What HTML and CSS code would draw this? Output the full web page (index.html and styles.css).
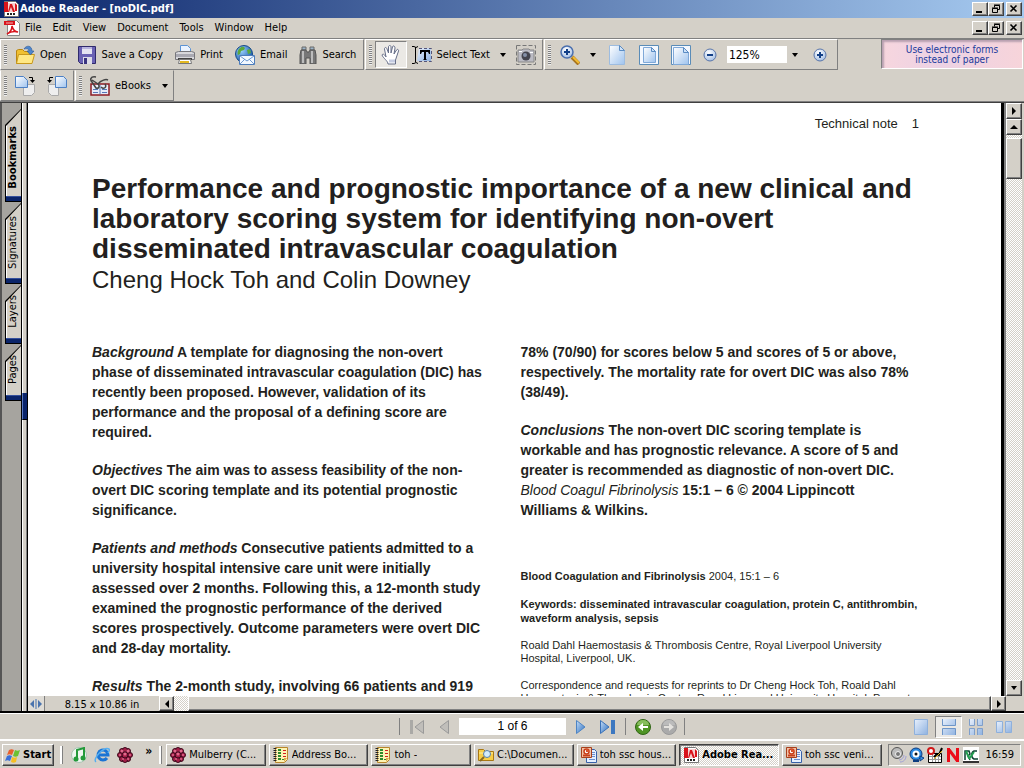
FILE: index.html
```html
<!DOCTYPE html>
<html lang="en">
<head>
<meta charset="utf-8">
<title>Adobe Reader - [noDIC.pdf]</title>
<link rel="stylesheet" href="styles.css">
</head>
<body>
<svg class="defs" aria-hidden="true">
  <defs>
    <linearGradient id="sheet" x1="0" y1="0" x2="1" y2="1"><stop offset="0" stop-color="#fff"/><stop offset="1" stop-color="#9fc3ee"/></linearGradient>
    <linearGradient id="tile" x1="0" y1="0" x2="1" y2="1"><stop offset="0" stop-color="#e8f0fc"/><stop offset="1" stop-color="#8fb2e0"/></linearGradient>
    <linearGradient id="blueplay" x1="0" y1="0" x2="1" y2="1"><stop offset="0" stop-color="#c4dcf6"/><stop offset="1" stop-color="#2c6fc0"/></linearGradient>
    <radialGradient id="orb" cx=".4" cy=".3" r=".8"><stop offset="0" stop-color="#fff"/><stop offset="1" stop-color="#9ab8e2"/></radialGradient>
    <radialGradient id="globe" cx=".35" cy=".3" r=".8"><stop offset="0" stop-color="#9ad0ff"/><stop offset="1" stop-color="#0b4ea0"/></radialGradient>
    <symbol id="adobe" viewBox="0 0 16 16">
      <path d="M1.500.500h11l3 3v12h-14z" fill="#fff" stroke="#777"/><path d="M1 1h4v10H1z" fill="#d8131b"/><path d="M5 2h7v9H5z" fill="#f6d0d0"/>
      <path d="M5 11l2-8h2l3 8h-2L8 6l-2 5z" fill="#d8131b"/><path d="M12 2v8h2V4z" fill="#d8131b"/><path d="M4 13h9" stroke="#222" stroke-width="2" stroke-dasharray="2 1"/>
    </symbol>
    <symbol id="berry" viewBox="0 0 16 16">
      <g fill="#a51e48" stroke="#3c0a1c"><circle cx="5" cy="4" r="2.500"/><circle cx="11" cy="4" r="2.500"/><circle cx="3" cy="8" r="2.500"/><circle cx="13" cy="8" r="2.500"/><circle cx="5" cy="12" r="2.500"/><circle cx="11" cy="12" r="2.500"/><circle cx="8" cy="13" r="2.500"/><circle cx="8" cy="3" r="2.500"/><circle cx="8" cy="8" r="3"/></g>
      <g fill="#e06a8c"><circle cx="5" cy="4" r="1.500"/><circle cx="11" cy="4" r="1.500"/><circle cx="8" cy="7" r="1.500"/><circle cx="3" cy="8" r="1"/><circle cx="13" cy="8" r="1"/><circle cx="6" cy="12" r="1"/><circle cx="11" cy="12" r="1"/></g>
    </symbol>
    <symbol id="notes" viewBox="0 0 16 16">
      <path d="M2.500.500h12v12l-3 3h-9z" fill="#fdf3b4" stroke="#b9862c"/><path d="M14 11h-3v4z" fill="#e0a648"/><path d="M2 1v14" stroke="#222" stroke-width="3" stroke-dasharray="1 1"/>
      <path d="M5 3h3M5 6h3M5 9h3M5 12h3" stroke="#2c8a2c" stroke-width="2"/><path d="M10 3.500h3M10 6.500h3M10 9.500h3" stroke="#d02020"/><path d="M9 12.500h2" stroke="#2c8a2c"/>
    </symbol>
    <symbol id="slides" viewBox="0 0 16 16">
      <path d="M5.500 2.500h8l2 2v11h-10z" fill="#e5efff" stroke="#3760a8"/><path d="M8 12.500h6M11 5.500h3M11 7.500h3M11 9.500h3" stroke="#6b8fd0"/>
      <path d="M.5.500h10v10H.5z" fill="#f2c3a8" stroke="#a8401c"/><circle cx="5.500" cy="4.500" r="2.500" fill="#fff" stroke="#c8401c" stroke-width="1.500"/><path d="M5 5V2a3 3 0 0 1 3 3z" fill="#d9532c"/><path d="M2 8.500h7" stroke="#c8401c" stroke-width="2"/>
    </symbol>
    <symbol id="min" viewBox="0 0 12 10"><path d="M2 8h6" stroke="#000" stroke-width="2"/></symbol>
    <symbol id="restore" viewBox="0 0 12 10"><path d="M4.500 3.500v-2h5v4h-2M4 1h6M2.500 4.500h5v4h-5zM2 4h6" fill="none" stroke="#000"/></symbol>
    <symbol id="close" viewBox="0 0 12 10"><path d="M2.500 1.500l6 6M8.500 1.500l-6 6" stroke="#000" stroke-width="1.600"/></symbol>
    <symbol id="down" viewBox="0 0 8 8"><path d="M1 2h6L4 6z" fill="#000"/></symbol>
    <symbol id="up" viewBox="0 0 8 8"><path d="M0 6h8L4 2z" fill="#000"/></symbol>
    <symbol id="left" viewBox="0 0 8 8"><path d="M6 0v8L2 4z" fill="#000"/></symbol>
    <symbol id="right" viewBox="0 0 8 8"><path d="M2 0v8l4-4z" fill="#000"/></symbol>
  </defs>
</svg>

<div class="app">
  <header class="titlebar">
    <svg class="i16"><use href="#adobe"/></svg>
    <h1 class="title">Adobe Reader - [noDIC.pdf]</h1>
    <div class="winbtns">
      <button class="winbtn" aria-label="Minimize"><svg><use href="#min"/></svg></button><button class="winbtn" aria-label="Restore"><svg><use href="#restore"/></svg></button><button class="winbtn last" aria-label="Close"><svg><use href="#close"/></svg></button>
    </div>
  </header>

  <nav class="menubar">
    <svg class="i16" viewBox="0 0 16 16"><path d="M3.500.500h9l3 3v12h-12z" fill="#fff" stroke="#888"/><path d="M0 1h11v4H0z" fill="#d8131b"/><path d="M2 3h7" stroke="#f4b4b4"/><path d="M3 14c4-2 5-5 5-8 1 4 3 6 6 6-4-1-8 0-11 2z" fill="none" stroke="#d8131b" stroke-width="1.500"/></svg>
    <button>File</button><button>Edit</button><button>View</button><button>Document</button><button>Tools</button><button>Window</button><button>Help</button>
    <div class="winbtns">
      <button class="winbtn" aria-label="Minimize document"><svg><use href="#min"/></svg></button><button class="winbtn" aria-label="Restore document"><svg><use href="#restore"/></svg></button><button class="winbtn last" aria-label="Close document"><svg><use href="#close"/></svg></button>
    </div>
  </nav>

  <div class="toolrow">
    <div class="group file">
      <i class="grip"></i>
      <button class="tool"><svg class="i20" viewBox="0 0 20 20"><path d="M1.500 18.500v-13l2-1h4l2 2h7v12z" fill="#f0c030" stroke="#b98612"/><path d="M1.500 18.500l2-9h16l-2.500 9z" fill="#ffe884" stroke="#c8981c"/><path d="M9 4c2-4 8-4 8 2h2l-3.500 4L12 6h2c0-2-2-3-5-2z" fill="#4d86cc" stroke="#2a5898" stroke-width=".6"/></svg>Open</button>
      <button class="tool"><svg class="i18" viewBox="0 0 18 18"><path d="M.5.500h17v17h-15l-2-2z" fill="#6a62b4" stroke="#2f2a6c"/><path d="M4 1h10v7H4z" fill="#e4e4f2"/><path d="M4 2h10" stroke="#8c84cc"/><path d="M5 11h9v7H5z" fill="#dcdce8"/><path d="M6 12h3v6H6z" fill="#3a3480"/></svg>Save a Copy</button>
      <button class="tool"><svg class="i20" viewBox="0 0 20 20"><path d="M5.500 8V.5h7l3 3V8z" fill="#eaf3ff" stroke="#5c93d4"/><path d="M.5 7.500l3-1h13l3 1v7h-19z" fill="#d8d8dc" stroke="#77777c"/><path d="M1 9h18v3H1z" fill="#a9a9b2"/><path d="M3 13h14v2H3z" fill="#444"/><path d="M4.500 14.500h11l1 4h-13z" fill="#fff" stroke="#777"/><path d="M5 17h9" stroke="#e3b820" stroke-width="2"/></svg>Print</button>
      <button class="tool"><svg class="i20" viewBox="0 0 20 20"><circle cx="9" cy="9" r="8.500" fill="url(#globe)" stroke="#174a88"/><path d="M5 3c2-2 4-1 5 0l-1 2-3 1-1 3-2 1C2 8 3 4 5 3zM12 5l3-1 1 4-3 1z" fill="#5ca83c"/><path d="M4.500 10.500h15v9h-15z" fill="#f2f8ff" stroke="#4d7cba"/><path d="M5 11l7 5 7-5M5 19l5-5M19 19l-5-5" fill="none" stroke="#6f9ad0"/></svg>Email</button>
      <button class="tool"><svg class="i18" viewBox="0 0 18 18"><path d="M3 1h4v3H3zM11 1h4v3h-4z" fill="#9cb4c8" stroke="#6b6b6b"/><path d="M2 4h5l1 2h2l1-2h5l1 5v9h-6v-6H7v6H1V9z" fill="#777" stroke="#555"/><path d="M4 5v12M13 5v12" stroke="#bcbcbc" stroke-width="2"/></svg>Search</button>
    </div>
    <div class="group basic">
      <i class="grip"></i>
      <button class="tool active" aria-label="Hand tool"><svg class="i20" viewBox="0 0 20 20"><path d="M7 19c0-3-5-6-6-9 1-2 3 0 4 2L3.500 4c0-2 2-2 2.500 0l1.500 4V2c0-2 2.500-2 2.500 0v6l1.500-6c.5-2 2.500-1 2.500 1l-1 6 2.500-4c1-1.500 2.500 0 2 1l-3 9v4z" fill="#fff" stroke="#666e88"/><path d="M8 16h6" stroke="#c5cce2" stroke-width="3"/></svg></button>
      <button class="tool"><svg class="i20" viewBox="0 0 20 20"><path d="M0 1.500h2l2 1 2-1M0 18.500h2l2-1 2 1M3.500 2v15" fill="none" stroke="#000"/><path d="M7 3h12v13H5z" fill="url(#tile)"/><path d="M7 3.500h12.500v13H7" fill="none" stroke="#557" stroke-dasharray="3 2"/><path d="M8 5h10v4h-1l-1-2h-2v7l1 1h-4l1-1V7h-2L9 9H8z" fill="#000"/></svg>Select Text<svg class="i8"><use href="#down"/></svg></button>
      <button class="tool" aria-label="Snapshot tool"><svg class="i20" viewBox="0 0 20 20"><path d="M.5.500h19v19H.5z" fill="none" stroke="#777" stroke-dasharray="4 2"/><path d="M2 5h4l1-1h6l1 1h4v12H2z" fill="#bbbbc4" stroke="#888"/><circle cx="10" cy="11" r="4.500" fill="#45454f"/><circle cx="9" cy="10" r="2" fill="#8590a8"/><path d="M3 6.500h3M14 7.500h3" stroke="#fff"/></svg></button>
    </div>
    <div class="group zoom">
      <i class="grip"></i>
      <button class="tool" aria-label="Zoom in tool"><svg class="i20" viewBox="0 0 20 20"><path d="M12 12l7 7" stroke="#a87420" stroke-width="4"/><path d="M13 12l6 6" stroke="#f4bd32" stroke-width="2"/><circle cx="7" cy="7" r="6" fill="url(#orb)" stroke="#4a6fae" stroke-width="1.500"/><path d="M4 7h6M7 4v6" stroke="#113f88" stroke-width="2"/></svg><svg class="i8"><use href="#down"/></svg></button>
      <button class="tool actual" aria-label="Actual size"><svg class="i20" viewBox="0 0 20 20"><path d="M2.500.500h10l5 5v14h-15z" fill="url(#sheet)" stroke="#9dbce0"/><path d="M12.500.500v5h5z" fill="#cfe2f8" stroke="#5a8cc4"/></svg></button>
      <button class="tool" aria-label="Fit page"><svg class="i20" viewBox="0 0 20 20"><path d="M.5.500h19v19H.5z" fill="#f4f8ff" stroke="#5a8cb8"/><path d="M4.500 2.500h8l4 4v11h-12z" fill="url(#sheet)" stroke="#7fa8d8"/><path d="M12.500 2.500v4h4z" fill="#cfe2f8" stroke="#5a8cc4"/></svg></button>
      <button class="tool" aria-label="Fit width"><svg class="i20" viewBox="0 0 20 20"><path d="M.5.500h19v19H.5z" fill="#f4f8ff" stroke="#5a8cb8"/><path d="M2.500 2.500h10l5 5v12h-15z" fill="url(#sheet)" stroke="#7fa8d8"/><path d="M12.500 2.500v5h5z" fill="#cfe2f8" stroke="#5a8cc4"/></svg></button>
      <button class="tool" aria-label="Zoom out"><svg class="i14" viewBox="0 0 14 14"><circle cx="7" cy="7" r="6" fill="url(#orb)" stroke="#5a76aa"/><path d="M4 7h6" stroke="#123f86" stroke-width="2"/></svg></button>
      <input class="zoomval" type="text" value="125%" aria-label="Zoom level">
      <button class="tool arrow" aria-label="Zoom presets"><svg class="i8"><use href="#down"/></svg></button>
      <button class="tool" aria-label="Zoom in"><svg class="i14" viewBox="0 0 14 14"><circle cx="7" cy="7" r="6" fill="url(#orb)" stroke="#5a76aa"/><path d="M4 7h6M7 4v6" stroke="#123f86" stroke-width="2"/></svg></button>
    </div>
    <a class="promo" href="#">Use electronic forms<br>instead of paper</a>
  </div>

  <div class="toolrow second">
    <div class="group rotate">
      <i class="grip"></i>
      <button class="tool" aria-label="Rotate clockwise"><svg class="i20" viewBox="0 0 20 20"><path d="M8.500 8.500h11v8l-3 3h-8z" fill="#eee" stroke="#aaa"/><path d="M.5.500h8l4 4v7H.5z" fill="url(#sheet)" stroke="#4c80c4"/><path d="M14 1.500h3.500V5" fill="none" stroke="#000"/><path d="M15 4h5l-2.500 3z"/></svg></button>
      <button class="tool" aria-label="Rotate counterclockwise"><svg class="i20" viewBox="0 0 20 20"><path d="M1.500 8.500h10v11h-7l-3-3z" fill="#eee" stroke="#aaa"/><path d="M8.500.500h8l3 3v8h-11z" fill="url(#sheet)" stroke="#4c80c4"/><path d="M6 1.500H2.500V5" fill="none" stroke="#000"/><path d="M0 4h5L2.500 7z"/></svg></button>
    </div>
    <div class="group books">
      <i class="grip"></i>
      <button class="tool"><svg class="i20" viewBox="0 0 20 20"><path d="M1 8h18v11H1z" fill="#e7ecf8" stroke="#8d1c24" stroke-width="1.500"/><path d="M10 9v9M3 13.500h5M3 16.500h5M12 13.500h5M12 16.500h5" stroke="#5577b8"/><path d="M6 1C0 0 0 4 2 6l4 6c3 1 4-2 2-4L2 4M8 8c3-4 8-5 10-4M11 11c3 3 6 0 4-3" fill="none" stroke="#444" stroke-width="1.500"/></svg>eBooks<svg class="i8"><use href="#down"/></svg></button>
    </div>
  </div>

  <main class="work">
    <aside class="tabs">
      <div class="tablist">
        <button class="tab t1"><span>Bookmarks</span></button>
        <button class="tab t2"><span>Signatures</span></button>
        <button class="tab t3"><span>Layers</span></button>
        <button class="tab t4"><span>Pages</span></button>
      </div>
      <div class="splitter"><i></i></div>
    </aside>
    <div class="viewer">
      <div class="canvas">
        <article class="page">
          <p class="folio">Technical note<span>1</span></p>
          <h2 class="headline">Performance and prognostic importance of a new clinical and<br>laboratory scoring system for identifying non-overt<br>disseminated intravascular coagulation</h2>
          <p class="authors">Cheng Hock Toh and Colin Downey</p>
          <div class="columns">
            <div class="abstract">
              <p><em>Background</em> A template for diagnosing the non-overt<br>phase of disseminated intravascular coagulation (DIC) has<br>recently been proposed. However, validation of its<br>performance and the proposal of a defining score are<br>required.</p>
              <p><em>Objectives</em> The aim was to assess feasibility of the non-<br>overt DIC scoring template and its potential prognostic<br>significance.</p>
              <p><em>Patients and methods</em> Consecutive patients admitted to a<br>university hospital intensive care unit were initially<br>assessed over 2 months. Following this, a 12-month study<br>examined the prognostic performance of the derived<br>scores prospectively. Outcome parameters were overt DIC<br>and 28-day mortality.</p>
              <p><em>Results</em> The 2-month study, involving 66 patients and 919</p>
            </div>
            <div class="abstract">
              <p>78% (70/90) for scores below 5 and scores of 5 or above,<br>respectively. The mortality rate for overt DIC was also 78%<br>(38/49).</p>
              <p><em>Conclusions</em> The non-overt DIC scoring template is<br>workable and has prognostic relevance. A score of 5 and<br>greater is recommended as diagnostic of non-overt DIC.<br><em class="journal">Blood Coagul Fibrinolysis</em> 15:1 – 6 © 2004 Lippincott<br>Williams &amp; Wilkins.</p>
              <div class="meta">
                <p><b>Blood Coagulation and Fibrinolysis</b> 2004, 15:1 – 6</p>
                <p><b>Keywords: disseminated intravascular coagulation, protein C, antithrombin,<br>waveform analysis, sepsis</b></p>
                <p class="tight">Roald Dahl Haemostasis &amp; Thrombosis Centre, Royal Liverpool University<br>Hospital, Liverpool, UK.</p>
                <p class="tight">Correspondence and requests for reprints to Dr Cheng Hock Toh, Roald Dahl<br>Haemostasis &amp; Thrombosis Centre, Royal Liverpool University Hospital, Prescot</p>
              </div>
            </div>
          </div>
        </article>
        <div class="vscroll">
          <button class="sb" aria-label="Toggle pane"><svg><use href="#right"/></svg></button>
          <button class="sb" aria-label="Scroll up"><svg><use href="#up"/></svg></button>
          <div class="track"><div class="thumb"></div></div>
          <button class="sb" aria-label="Scroll down"><svg><use href="#down"/></svg></button>
        </div>
      </div>
      <div class="hrow">
        <button class="split" aria-label="Resize"><svg viewBox="0 0 12 10"><path d="M4 1v8L0 5zM8 1v8l4-4z" fill="#4b74ae"/><path d="M6 0v10" stroke="#4b74ae"/></svg></button>
        <span class="dims">8.15 x 10.86 in</span>
        <button class="sb" aria-label="Scroll left"><svg><use href="#left"/></svg></button>
        <div class="track"><div class="thumb"></div></div>
        <button class="sb" aria-label="Scroll right"><svg><use href="#right"/></svg></button>
      </div>
    </div>
  </main>

  <nav class="pagebar">
    <div class="pager">
      <button aria-label="First page"><svg width="16" height="16" viewBox="0 0 16 16"><path d="M1 1h3v14H1z" fill="#aaa9a6"/><path d="M14.500 1.500v13L6 8z" fill="#c0beba" stroke="#999"/></svg></button>
      <button aria-label="Previous page"><svg width="10" height="16" viewBox="0 0 10 16"><path d="M9.500 1.500v13L1 8z" fill="#c0beba" stroke="#999"/></svg></button>
      <input type="text" value="1 of 6" aria-label="Page number">
      <button aria-label="Next page"><svg width="10" height="16" viewBox="0 0 10 16"><path d="M.5 1.500v13L9 8z" fill="url(#blueplay)" stroke="#4d84c4"/></svg></button>
      <button aria-label="Last page"><svg width="16" height="16" viewBox="0 0 16 16"><path d="M.5 1.500v13L9 8z" fill="url(#blueplay)" stroke="#3a72b8"/><path d="M11 1h4v14h-4z" fill="#3d78c0"/></svg></button>
      <i class="sep"></i>
      <button aria-label="Previous view"><svg width="16" height="16" viewBox="0 0 16 16"><circle cx="8" cy="8" r="7.500" fill="#4f9424" stroke="#2f6414"/><path d="M2 6a6 5 0 0 1 12 0z" fill="#86bd5c"/><path d="M3 8l5-4v3h5v2H8v3z" fill="#fff"/></svg></button>
      <button aria-label="Next view"><svg width="16" height="16" viewBox="0 0 16 16"><circle cx="8" cy="8" r="7.500" fill="#aaa" stroke="#999"/><path d="M2 6a6 5 0 0 1 12 0z" fill="#bbb"/><path d="M13 8L8 4v3H3v2h5v3z" fill="#e4e2de"/></svg></button>
    </div>
    <div class="layouts">
      <button aria-label="Single page"><svg width="14" height="16" viewBox="0 0 14 16"><path d="M.5.500h13v15H.5z" fill="url(#tile)" stroke="#8eb0dc"/></svg></button>
      <button class="on" aria-label="Continuous"><svg width="14" height="16" viewBox="0 0 14 16"><path d="M.5 0v6.500h13V0M.5 16V9.500h13V16" fill="url(#tile)" stroke="#6f96c8"/></svg></button>
      <button aria-label="Continuous facing"><svg width="14" height="16" viewBox="0 0 14 16"><path d="M.5 0v6.500h5V0M8.500 0v6.500h5V0M.5 16V9.500h5V16M8.500 16V9.500h5V16" fill="url(#tile)" stroke="#7f9fca"/></svg></button>
      <button aria-label="Facing"><svg width="16" height="16" viewBox="0 0 16 16"><path d="M.5 2.500h6v11h-6zM9.500 2.500h6v11h-6z" fill="url(#tile)" stroke="#8eb0dc"/></svg></button>
    </div>
  </nav>

  <footer class="taskbar">
    <button class="start"><svg class="i16" viewBox="0 0 16 16"><path d="M4 3c2-1 3-1 5 0L7 8c-2-1-3-1-5 0z" fill="#e8602c"/><path d="M10 3c2 1 3 1 5 0l-2 6c-2 1-3 1-5 0z" fill="#6cc030"/><path d="M2 9c2-1 3-1 5 0l-2 5c-2-1-3-1-5 0z" fill="#3a6fd8"/><path d="M7 10c2 1 3 1 5 0l-1 5c-2 1-3 1-5 0z" fill="#f5bf22"/></svg>Start</button>
    <i class="bar"></i>
    <div class="quick">
      <button aria-label="iTunes"><svg class="i16" viewBox="0 0 16 16"><circle cx="8" cy="8" r="7.500" fill="#eef6f0" stroke="#aac4b4"/><path d="M6 12V3l7-2v9" fill="none" stroke="#239a3a" stroke-width="2"/><circle cx="5" cy="12" r="2.500" fill="#239a3a"/><circle cx="12" cy="11" r="2.500" fill="#239a3a"/></svg></button>
      <button aria-label="Internet Explorer"><svg class="i16" viewBox="0 0 16 16"><path d="M13 11a5 5 0 1 1 1-3H4" fill="none" stroke="#1b74d4" stroke-width="3"/><path d="M2 15C-2 12 10-1 15 2c1 1 0 2-1 4" fill="none" stroke="#56aef0" stroke-width="1.500"/></svg></button>
      <button aria-label="Mulberry"><svg class="i16"><use href="#berry"/></svg></button>
      <button class="more" aria-label="More">»</button>
    </div>
    <i class="bar"></i>
    <div class="tasks">
      <button><svg class="i16"><use href="#berry"/></svg><span>Mulberry (C...</span></button>
      <button><svg class="i16"><use href="#notes"/></svg><span>Address Bo...</span></button>
      <button><svg class="i16"><use href="#notes"/></svg><span>toh -</span></button>
      <button><svg class="i16" viewBox="0 0 16 16"><path d="M.5 13.500v-11h5l2 2h8v9z" fill="#f8ce48" stroke="#a87814"/><path d="M1 6h14" stroke="#fff0a0"/><circle cx="9" cy="7" r="3.500" fill="#d4ecfb" stroke="#557fa8"/><path d="M6 10l-4 4" stroke="#8a6a20" stroke-width="2"/></svg><span>C:\Documen...</span></button>
      <button><svg class="i16"><use href="#slides"/></svg><span>toh ssc hous...</span></button>
      <button class="current"><svg class="i16"><use href="#adobe"/></svg><span>Adobe Rea...</span></button>
      <button><svg class="i16"><use href="#slides"/></svg><span>toh ssc veni...</span></button>
    </div>
    <div class="tray">
      <svg class="i16" viewBox="0 0 16 16"><circle cx="6" cy="6" r="5.500" fill="#bbb" stroke="#555"/><circle cx="7" cy="7" r="2.500" fill="#777" stroke="#eee"/><path d="M9 15c4 0 6-3 6-6M8 13c3 0 5-3 5-5" fill="none" stroke="#9f9fd8"/></svg>
      <svg class="i16" viewBox="0 0 16 16"><circle cx="7" cy="7" r="6" fill="#2a88e0" stroke="#0d3c80"/><circle cx="7" cy="7" r="3.500" fill="#fff"/><circle cx="7" cy="7" r="1.500" fill="#111"/><path d="M11 9l4 2-4 3z" fill="#3a98f0" stroke="#0d3c80"/><path d="M4 14h6" stroke="#0d3c80" stroke-width="2"/></svg>
      <svg class="i16" viewBox="0 0 16 16"><path d="M1.500 6.500h13v9h-13z" fill="#fff" stroke="#000"/><path d="M2 9.500h12M2 12.500h12M5.500 7v8M8.500 7v8M11.500 7v8" stroke="#999"/><circle cx="4" cy="4" r="3" fill="#fff" stroke="#d01818" stroke-width="2"/><path d="M7 10l3-3 2 1 3-7" fill="none" stroke="#000" stroke-width="2"/><path d="M7 12l8-8" stroke="#e8b820"/></svg>
      <svg class="i16" viewBox="0 0 16 16"><path d="M3.500 15V1M12.500 15V1M3.500 2l9 12" fill="none" stroke="#ec0c18" stroke-width="3"/></svg>
      <svg class="i16" viewBox="0 0 16 16"><path d="M0 0h16v16H0z" fill="#fff"/><path d="M2 13V4h4l1 3-2 2 2 4M14 4h-3c-3 1-3 7 0 8h4" fill="none" stroke="#0c4030" stroke-width="1.500"/><path d="M6 12l5-7M3 4l3 7" stroke="#22a050" stroke-width="2"/><path d="M0 15h16" stroke="#333" stroke-width="2"/></svg>
      <time>16:59</time>
    </div>
  </footer>
</div>
</body>
</html>
```

FILE: styles.css
```css
:root {
  --face: #d4d0c8;
  --shade: #808080;
  --dark: #404040;
  --ink: #231f20;
}
* { box-sizing: border-box; }
body {
  margin: 0;
  background: var(--face);
  color: #000;
  font: 11px/14px "DejaVu Sans Condensed", "DejaVu Sans", sans-serif;
}
button, input {
  margin: 0;
  padding: 0;
  border: 0;
  border-radius: 0;
  background: none;
  color: inherit;
  font: inherit;
}
p, h1, h2 { margin: 0; }
svg { display: block; flex: none; }
.defs { position: absolute; width: 0; height: 0; }
.i8 { width: 8px; height: 8px; }
.i14 { width: 14px; height: 14px; }
.i16 { width: 16px; height: 16px; }
.i18 { width: 18px; height: 18px; }
.i20 { width: 20px; height: 20px; }

.app { display: flex; flex-direction: column; height: 100vh; }

/* Title and menu bars */
.titlebar {
  flex: none;
  display: flex;
  align-items: center;
  height: 18px;
  padding: 0 2px 0 3px;
  background: linear-gradient(90deg, #0a246a, #a6caf0);
}
.title {
  flex: 1;
  margin-left: 1px;
  color: #fff;
  font-size: 11px;
  font-weight: bold;
  white-space: nowrap;
}
.winbtns { display: flex; margin-left: auto; }
.winbtn {
  width: 16px;
  height: 14px;
  border: 1px solid;
  border-color: #fff var(--dark) var(--dark) #fff;
  background: var(--face);
  box-shadow: inset -1px -1px var(--shade);
}
.winbtn svg { width: 12px; height: 10px; margin: 1px; }
.winbtn.last { margin-left: 2px; }
.menubar {
  flex: none;
  display: flex;
  align-items: center;
  gap: 11px;
  height: 20px;
  padding: 0 2px 0 4px;
}
.menubar > .i16 { margin-right: -6px; }

/* Toolbars */
.toolrow {
  flex: none;
  display: flex;
  height: 32px;
  gap: 1px;
  border-top: 1px solid var(--shade);
}
.toolrow.second { border-top: 0; border-bottom: 1px solid var(--shade); }
.group {
  display: flex;
  align-items: center;
  padding: 0 7px 0 3px;
  gap: 12px;
  border: 1px solid;
  border-color: #fff var(--shade) var(--shade) #fff;
}
.second .group { border-top-color: var(--face); }
.grip {
  width: 3px;
  height: 20px;
  margin-right: -4px;
  background: repeating-linear-gradient(var(--shade) 0 1px, #eee 1px 2px);
}
.tool { display: flex; align-items: center; gap: 5px; white-space: nowrap; }
.basic { gap: 5px; padding-right: 6px; }
.basic .grip { margin-right: -2px; }
.basic .tool { gap: 4px; }
.basic .i8 { margin: 0 4px 0 5px; }
.tool.active {
  width: 32px;
  height: 27px;
  justify-content: center;
  border: 1px solid;
  border-color: var(--shade) #fff #fff var(--shade);
  background: #ebe9e5;
}
.zoom { padding-right: 10px; }
.zoom .grip { margin-right: -3px; }
.zoom .i8 { margin-left: 4px; }
.tool.actual { margin-left: -2px; }
.zoomval {
  width: 60px;
  height: 17px;
  margin-left: -2px;
  padding: 0 2px;
  background: #fff;
  font-size: 12px;
}
.tool.arrow { margin: 0 2px 0 -12px; }
.promo {
  width: 142px;
  height: 30px;
  margin-left: auto;
  margin-right: 1px;
  padding-top: 5px;
  border: 1px solid;
  border-color: var(--shade) #fff #fff var(--shade);
  background: linear-gradient(90deg, #f7d6de, #ecd2e4 40%, #f7d4da);
  box-shadow: inset 2px 2px 2px #b8a0b0;
  color: #1a3a9c;
  font: 10px/10px "DejaVu Sans Condensed", "DejaVu Sans", sans-serif;
  text-align: center;
  text-decoration: none;
}
.rotate { padding-right: 6px; }
.books { padding-right: 4px; }
.books .i8 { margin-left: 5px; }

/* Work area */
.work {
  flex: 1;
  min-height: 0;
  display: flex;
  border-top: 1px solid var(--dark);
  border-bottom: 2px solid #000;
}
.tabs {
  flex: none;
  display: flex;
  width: 28px;
  border-left: 2px solid #555;
  background: #a6a49f;
}
.tablist { display: flex; flex-direction: column; gap: 1px; width: 19px; padding: 6px 0 0 3px; }
.tab {
  position: relative;
  display: flex;
  justify-content: center;
  align-items: flex-start;
  width: 16px;
  background: #000;
  clip-path: polygon(0 16px, 100% 0, 100% 100%, 0 100%);
}
.tab::before {
  content: "";
  position: absolute;
  inset: 1px 0 1px 1px;
  background: linear-gradient(90deg, #fff 1px, var(--face) 1px);
  clip-path: polygon(0 16px, 100% 0, 100% 100%, 0 100%);
}
.tab::after {
  content: "";
  position: absolute;
  inset: auto 0 1px 1px;
  height: 5px;
  background: linear-gradient(#35509c 1px, #0a246a 1px);
}
.tab span {
  position: relative;
  writing-mode: vertical-rl;
  transform: rotate(180deg);
}
.tab.t1 { height: 93px; padding-top: 17px; font-family: "DejaVu Sans", sans-serif; font-size: 10px; font-weight: bold; }
.tab.t2 { height: 81px; padding-top: 13px; }
.tab.t3 { height: 59px; padding-top: 10px; }
.tab.t4 { height: 56px; padding-top: 10px; }
.splitter {
  width: 7px;
  padding-top: 290px;
  border: solid #000;
  border-width: 0 1px;
  background: linear-gradient(90deg, #fff 1px, var(--face) 1px 4px, var(--shade) 4px);
}
.splitter i { display: block; height: 27px; background: #0a246a; border-left: 1px solid #5878c0; border-bottom: 1px solid #000; }
.viewer { flex: 1; min-width: 0; display: flex; flex-direction: column; }
.canvas { flex: 1; min-height: 0; display: flex; background: var(--shade); }
.page {
  flex: 1;
  min-width: 0;
  overflow: hidden;
  padding: 13px 82px 0 64px;
  border-right: 3px solid #000;
  background: #fff;
  color: var(--ink);
  font-family: "Liberation Sans", Arial, sans-serif;
  white-space: nowrap;
}
.folio { font-size: 13px; line-height: 16px; text-align: right; }
.folio span { margin-left: 14px; }
.headline { margin-top: 42px; font-size: 28px; line-height: 30px; }
.authors { font-size: 24px; line-height: 32px; }
.columns { display: grid; grid-template-columns: 1fr 1fr; gap: 30px; margin-top: 46px; }
.abstract { min-width: 0; font-size: 14px; line-height: 20px; font-weight: bold; }
.abstract > p { margin-bottom: 18px; }
.journal { font-weight: normal; }
.meta { margin-top: 49px; font-size: 11px; line-height: 14px; font-weight: normal; }
.meta p { margin-bottom: 14px; }
.meta .tight { line-height: 13px; }

/* Scroll bars */
.vscroll { display: flex; flex-direction: column; width: 20px; padding: 0 2px; border-right: 2px solid var(--face); background: var(--shade); }
.vscroll { padding-right: 0; }
.sb {
  flex: none;
  display: grid;
  place-items: center;
  width: 16px;
  height: 16px;
  border: 1px solid;
  border-color: #fff var(--dark) var(--dark) #fff;
  background: var(--face);
  box-shadow: inset -1px -1px var(--shade);
}
.sb svg { width: 8px; height: 8px; }
.track { flex: 1; background: repeating-conic-gradient(#fff 0 25%, var(--face) 0 50%) 0 0 / 2px 2px; }
.thumb {
  border: 1px solid;
  border-color: #fff var(--dark) var(--dark) #fff;
  background: var(--face);
  box-shadow: inset -1px -1px var(--shade);
}
.vscroll .track { padding-top: 3px; }
.vscroll .thumb { height: 41px; }
.hrow { flex: none; display: flex; height: 15px; padding-right: 18px; background: var(--face); }
.hrow .sb { width: 15px; height: 15px; }
.hrow .track { padding-left: 14px; }
.hrow .thumb { height: 15px; }
.split { width: 17px; padding: 2px; border-right: 1px solid var(--shade); background: #dfdcd6; }
.split svg { width: 12px; height: 10px; }
.dims { width: 114px; text-align: center; line-height: 17px; }

/* Page navigation */
.pagebar {
  flex: none;
  display: grid;
  grid-template-columns: 1fr auto 1fr;
  align-items: center;
  height: 26px;
  padding-left: 60px;
  border-top: 1px solid #fff;
}
.pager {
  grid-column: 2;
  display: flex;
  align-items: center;
  gap: 10px;
  height: 17px;
  padding: 0 7px 0 9px;
  border: solid var(--shade);
  border-width: 0 1px;
}
.pager button:nth-of-type(2) { margin-left: 4px; }
.pager button:nth-of-type(4) { margin-left: 4px; }
.pager input { width: 107px; height: 17px; background: #fff; font: 12px/17px "Liberation Sans", Arial, sans-serif; text-align: center; }
.sep { width: 1px; height: 17px; margin: 0 -1px; background: var(--shade); }
.layouts { display: flex; align-items: center; justify-content: flex-end; gap: 7px; padding-right: 12px; }
.layouts .on {
  display: grid;
  place-items: center;
  width: 27px;
  height: 22px;
  border: 1px solid;
  border-color: var(--shade) #fff #fff var(--shade);
  background: #ebe9e5;
}
.layouts button:last-child { margin-left: 6px; }

/* Taskbar */
.taskbar {
  flex: none;
  display: flex;
  align-items: center;
  gap: 4px;
  height: 29px;
  padding: 2px 3px 1px 2px;
  border-top: 2px solid #fff;
}
.start, .tasks button {
  display: flex;
  align-items: center;
  gap: 3px;
  height: 22px;
  padding: 0 3px;
  border: 1px solid;
  border-color: #fff var(--dark) var(--dark) #fff;
  background: var(--face);
  box-shadow: inset -1px -1px var(--shade);
}
.start { gap: 2px; padding: 0 2px; font-weight: bold; }
.bar { flex: none; width: 3px; height: 18px; margin-left: 2px; border-left: 2px solid #fff; background: var(--shade); }
.quick { display: flex; align-items: center; gap: 7px; padding: 0 1px 0 4px; }
.more { margin: -8px 0 0 5px; font-weight: bold; font-size: 12px; }
.tasks { flex: 1; min-width: 0; display: flex; gap: 3px; }
.tasks button { flex: 1 1 0; min-width: 0; }
.tasks span { overflow: hidden; white-space: nowrap; }
.tasks .current {
  border-color: var(--dark) #fff #fff var(--dark);
  background: repeating-conic-gradient(#fff 0 25%, var(--face) 0 50%) 0 0 / 2px 2px;
  box-shadow: inset 1px 1px var(--shade);
  font-weight: bold;
}
.tray {
  display: flex;
  align-items: center;
  gap: 2px;
  height: 22px;
  margin-left: 3px;
  padding: 0 6px 0 2px;
  border: 1px solid;
  border-color: var(--shade) #fff #fff var(--shade);
}
.tray time { margin-left: 4px; }
```
